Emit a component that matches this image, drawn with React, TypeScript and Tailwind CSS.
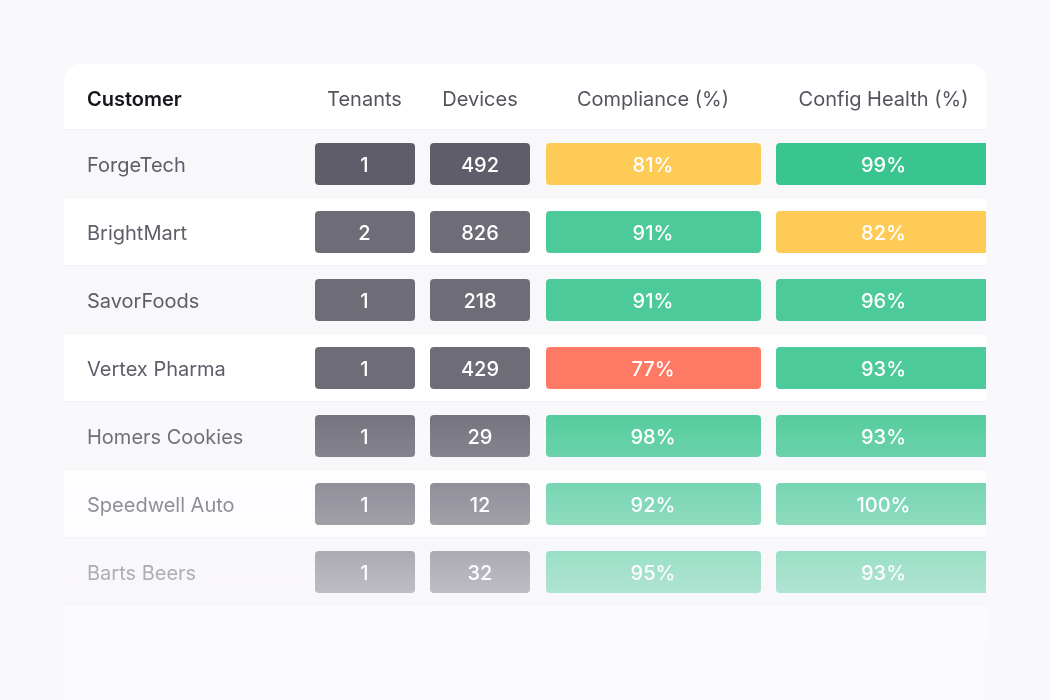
import React from "react";

type Tone = "gray" | "yellow" | "green" | "red";

type Row = {
  name: string;
  tenants: number;
  devices: number;
  compliance: number;
  health: number;
};

const rows: Row[] = [
  { name: "ForgeTech", tenants: 1, devices: 492, compliance: 81, health: 99 },
  { name: "BrightMart", tenants: 2, devices: 826, compliance: 91, health: 82 },
  { name: "SavorFoods", tenants: 1, devices: 218, compliance: 91, health: 96 },
  { name: "Vertex Pharma", tenants: 1, devices: 429, compliance: 77, health: 93 },
  { name: "Homers Cookies", tenants: 1, devices: 29, compliance: 98, health: 93 },
  { name: "Speedwell Auto", tenants: 1, devices: 12, compliance: 92, health: 100 },
  { name: "Barts Beers", tenants: 1, devices: 32, compliance: 95, health: 93 },
];

const toneFor = (pct: number): Tone => {
  if (pct < 80) return "red";
  if (pct < 90) return "yellow";
  return "green";
};

// first row is the hovered one, a touch darker
const toneClass = (tone: Tone, active: boolean) => {
  switch (tone) {
    case "gray":
      return active ? "bg-[#5f5d69]" : "bg-[#6e6c77]";
    case "yellow":
      return "bg-[#ffcb57]";
    case "red":
      return "bg-[#ff7a65]";
    default:
      return active ? "bg-[#3ac48f]" : "bg-[#4dca99]";
  }
};

const Badge = ({
  value,
  tone,
  active,
  wide,
}: {
  value: string;
  tone: Tone;
  active: boolean;
  wide?: boolean;
}) => (
  <div
    className={`${wide ? "w-[215px]" : "w-[100px]"} h-[42px] shrink-0 rounded-[4px] flex items-center justify-center pt-[3px] text-white text-[20px] font-medium ${toneClass(tone, active)}`}
  >
    {value}
  </div>
);

const HeaderCell = ({ label, wide }: { label: string; wide?: boolean }) => (
  <div className={`${wide ? "w-[215px]" : "w-[100px]"} shrink-0 text-center whitespace-nowrap`}>
    {label}
  </div>
);

export default function App() {
  return (
    <div
      className="w-[1050px] h-[700px] bg-[#f9f8fd] pt-16 pl-16 overflow-hidden"
      style={{ fontFamily: "Inter, 'Noto Sans', sans-serif" }}
    >
      <div className="w-[922px] h-[636px] rounded-t-2xl overflow-hidden bg-white [mask-image:linear-gradient(to_bottom,black_336px,rgba(0,0,0,0.2)_606px)]">
        <div className="h-[66px] flex items-center gap-[15.5px] pt-[4px] border-b border-[#f3f2f6] text-[20px] text-[#55535e]">
          <div className="w-[235px] shrink-0 pl-[23px] font-semibold text-[#16151b]">Customer</div>
          <HeaderCell label="Tenants" />
          <HeaderCell label="Devices" />
          <HeaderCell label="Compliance (%)" wide />
          <HeaderCell label="Config Health (%)" wide />
        </div>
        {rows.map((r, i) => (
          <div
            key={r.name}
            className={`h-[68px] flex items-center gap-[15.5px] border-b border-[#f3f2f6] ${i % 2 === 0 ? "bg-[#f8f7fa]" : "bg-white"}`}
          >
            <div className="w-[235px] shrink-0 pl-[23px] pt-[3px] text-[20px] text-[#5f5d68] whitespace-nowrap">
              {r.name}
            </div>
            <Badge value={String(r.tenants)} tone="gray" active={i === 0} />
            <Badge value={String(r.devices)} tone="gray" active={i === 0} />
            <Badge value={`${r.compliance}%`} tone={toneFor(r.compliance)} active={i === 0} wide />
            <Badge value={`${r.health}%`} tone={toneFor(r.health)} active={i === 0} wide />
          </div>
        ))}
      </div>
    </div>
  );
}
